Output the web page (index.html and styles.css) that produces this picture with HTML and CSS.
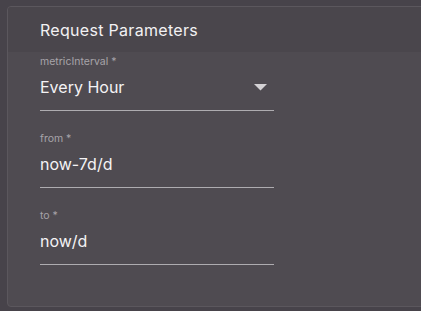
FILE: index.html
```
<!DOCTYPE html>
<html>
<head>
<meta charset="utf-8">
<link rel="stylesheet" href="styles.css">
</head>
<body>
<div class="card">
  <div class="card-header">Request Parameters</div>
  <div class="card-body">
    <div class="field">
      <div class="label">metricInterval *</div>
      <div class="value-row">
        <span class="value">Every Hour</span>
        <svg class="arrow" width="13" height="7" viewBox="0 0 13 7"><path d="M0 0 L13 0 L6.5 6.5 Z" fill="#d4d2d5"/></svg>
      </div>
    </div>
    <div class="field">
      <div class="label">from *</div>
      <div class="value-row"><span class="value">now-7d/d</span></div>
    </div>
    <div class="field">
      <div class="label">to *</div>
      <div class="value-row"><span class="value">now/d</span></div>
    </div>
  </div>
</div>
</body>
</html>
```
FILE: styles.css
```
html, body {
  margin: 0;
  padding: 0;
  background: #47434a;
  overflow: hidden;
  height: 311px;
}
body {
  font-family: "Inter", "Open Sans", sans-serif;
  padding: 6px 0 0 7px;
}
.card {
  width: 440px;
  height: 299px;
  border: 1px solid #5b575d;
  border-radius: 4px;
  background: #4f4b51;
  overflow: hidden;
}
.card-header {
  height: 45px;
  background: #4a464c;
  color: #f2f1f3;
  font-size: 16px;
  letter-spacing: 0.3px;
  line-height: 46px;
  padding-left: 32px;
}
.card-body {
  padding: 3px 0 0 32px;
}
.field {
  width: 234px;
  border-bottom: 1px solid #aeacb0;
  padding-bottom: 11px;
  margin-bottom: 21px;
}
.label {
  font-size: 10.5px;
  line-height: 14px;
  color: #a7a4a9;
}
.value-row {
  margin-top: 6px;
  display: flex;
  justify-content: space-between;
  align-items: center;
  height: 24px;
}
.value {
  font-size: 16px;
  line-height: 24px;
  color: #f4f3f5;
}
.arrow {
  margin-right: 7px;
  margin-top: 1px;
}
```
